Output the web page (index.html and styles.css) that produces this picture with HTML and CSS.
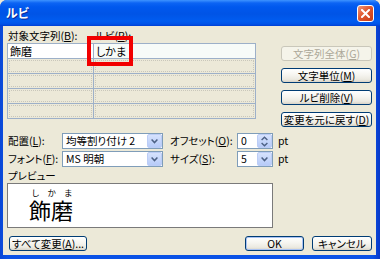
FILE: index.html
```html
<!DOCTYPE html>
<html lang="ja">
<head>
<meta charset="utf-8">
<link rel="stylesheet" href="styles.css">
</head>
<body>
<div class="window">
  <div class="titlebar">
    <span class="title">ルビ</span>
    <span class="close"><svg width="9" height="9" viewBox="0 0 9 9"><path d="M1 1L8 8M8 1L1 8" stroke="#fff" stroke-width="2" stroke-linecap="square"/></svg></span>
  </div>
  <div class="client">
    <div class="top">
      <div class="left">
        <div class="heads"><span class="h1">対象文字列(<u>B</u>):</span><span class="h2">ルビ(<u>R</u>):</span></div>
        <div class="grid">
          <div class="row first"><div class="cell c1"><span class="txt">飾磨</span></div><div class="cell c2"><span class="txt">しかま</span></div></div>
          <div class="row"><div class="cell c1"><div class="dot"></div></div><div class="cell c2"><div class="dot"></div></div></div>
          <div class="row"><div class="cell c1"><div class="dot"></div></div><div class="cell c2"><div class="dot"></div></div></div>
          <div class="row"><div class="cell c1"><div class="dot"></div></div><div class="cell c2"><div class="dot"></div></div></div>
          <div class="row"><div class="cell c1"><div class="dot"></div></div><div class="cell c2"><div class="dot"></div></div></div>
        </div>
        <div class="highlight"></div>
      </div>
      <div class="btns">
        <div class="btn disabled">文字列全体(<u>G</u>)</div>
        <div class="btn">文字単位(<u>M</u>)</div>
        <div class="btn">ルビ削除(<u>V</u>)</div>
        <div class="btn">変更を元に戻す(<u>D</u>)</div>
      </div>
    </div>
    <div class="opts">
      <span class="lab">配置(<u>L</u>):</span>
      <div class="combo"><span class="val">均等割り付け 2</span><span class="arrow"><svg width="7" height="5" viewBox="0 0 7 5"><path d="M0.6 0.6L3.5 3.6L6.4 0.6" fill="none" stroke="#4d6185" stroke-width="1.5"/></svg></span></div>
      <span class="lab2">オフセット(<u>O</u>):</span>
      <div class="combo"><span class="val">0</span><span class="arrow spin"><svg width="7" height="11" viewBox="0 0 7 11"><path d="M0.6 4L3.5 1.2L6.4 4M0.6 7L3.5 9.8L6.4 7" fill="none" stroke="#4d6185" stroke-width="1.4"/></svg></span></div>
      <span class="pt">pt</span>

      <span class="lab">フォント(<u>F</u>):</span>
      <div class="combo"><span class="val">MS 明朝</span><span class="arrow"><svg width="7" height="5" viewBox="0 0 7 5"><path d="M0.6 0.6L3.5 3.6L6.4 0.6" fill="none" stroke="#4d6185" stroke-width="1.5"/></svg></span></div>
      <span class="lab2">サイズ(<u>S</u>):</span>
      <div class="combo"><span class="val">5</span><span class="arrow"><svg width="7" height="5" viewBox="0 0 7 5"><path d="M0.6 0.6L3.5 3.6L6.4 0.6" fill="none" stroke="#4d6185" stroke-width="1.5"/></svg></span></div>
      <span class="pt">pt</span>
    </div>
    <div class="prevlab">プレビュー</div>
    <div class="preview">
      <div class="rubyword">
        <div class="rt"><span>し</span><span>か</span><span>ま</span></div>
        <div class="rb">飾磨</div>
      </div>
    </div>
    <div class="bottom">
      <div class="btn allbtn">すべて変更(<u>A</u>)...</div>
      <div class="spacer"></div>
      <div class="btn okbtn">OK</div>
      <div class="btn cancelbtn">キャンセル</div>
    </div>
  </div>
</div>
</body>
</html>
```
FILE: styles.css
```css
html, body {
  margin: 0;
  padding: 0;
}
body {
  width: 380px;
  height: 259px;
  overflow: hidden;
  font-family: "Noto Sans CJK JP", "Liberation Sans", sans-serif;
  font-size: 10.5px;
  font-feature-settings: "palt";
  white-space: nowrap;
  color: #000;
  background: #ece9d8;
}
u {
  text-decoration: underline;
  text-underline-offset: 1px;
}
.window {
  width: 380px;
  height: 259px;
  display: flex;
  flex-direction: column;
  background: linear-gradient(to right, #0a47d6, #0a52e6 2%, #0a52e6 98%, #0838c8);
  border-radius: 7px 7px 0 0;
  overflow: hidden;
}
.titlebar {
  height: 26px;
  flex: none;
  display: flex;
  align-items: center;
  justify-content: space-between;
  padding: 0 6px;
  background: linear-gradient(to bottom, #3e93ff 0px, #0c64f4 3px, #0058ee 7px, #0054e6 14px, #005cf0 21px, #0053e8 24px, #003fd4 26px);
}
.title {
  color: #fff;
  font-weight: bold;
  font-size: 12px;
  line-height: 14px;
  text-shadow: 1px 1px 0 #0b2a9a;
}
.close {
  width: 17px;
  height: 17px;
  box-sizing: border-box;
  border: 1px solid #fff;
  border-radius: 3px;
  background: linear-gradient(135deg, #f0977a 0%, #e0582f 45%, #c73a16 100%);
  display: flex;
  align-items: center;
  justify-content: center;
}
.client {
  flex: 1;
  min-height: 0;
  margin: 0 4px 4px 3px;
  background: #ece9d8;
  padding: 3px 4px 4px 4px;
  display: flex;
  flex-direction: column;
}
.top {
  display: flex;
  justify-content: space-between;
  align-items: flex-start;
}
.left {
  position: relative;
  width: 249px;
}
.heads {
  height: 14px;
  line-height: 14px;
  display: flex;
}
.h1 {
  width: 87px;
  padding-left: 1px;
}
.grid {
  border: 1px solid #9db0c8;
}
.row {
  display: flex;
  height: 14px;
}
.row + .row {
  border-top: 1px solid #9db0c8;
}
.cell {
  box-sizing: border-box;
  display: flex;
  align-items: center;
}
.c1 {
  width: 86px;
  border-right: 1px solid #9db0c8;
}
.c2 {
  flex: 1;
}
.first .cell {
  background: #fff;
}
.first .c2 {
  background: #f7fbf8;
}
.txt {
  padding-left: 2px;
  line-height: 14px;
  font-size: 11px;
}
.dot {
  flex: 1;
  align-self: stretch;
  margin: 1px;
  border: 1px dotted #c9c7bb;
}
.highlight {
  position: absolute;
  left: 80px;
  top: 7px;
  width: 46px;
  height: 30px;
  box-sizing: border-box;
  border: 4px solid #f20000;
}
.btns {
  width: 91px;
  margin-top: 17px;
  display: flex;
  flex-direction: column;
  gap: 7px;
}
.btn {
  height: 15px;
  box-sizing: border-box;
  border: 1px solid #003c74;
  border-radius: 3px;
  background: linear-gradient(to bottom, #ffffff 0%, #f6f5f0 45%, #ebe9e0 80%, #d8d3c7 100%);
  display: flex;
  align-items: center;
  justify-content: center;
  line-height: 13px;
}
.btn.disabled {
  border-color: #c9c7ba;
  background: #f5f4ea;
  color: #aca899;
}
.opts {
  margin-top: 6px;
  display: grid;
  grid-template-columns: 55px 101px 74px 36px auto;
  grid-auto-rows: 16px;
  row-gap: 2px;
  align-items: center;
}
.lab {
  padding-left: 1px;
  line-height: 14px;
}
.lab2 {
  padding-left: 7px;
  line-height: 14px;
}
.pt {
  padding-left: 5px;
  line-height: 14px;
}
.combo {
  height: 16px;
  box-sizing: border-box;
  border: 1px solid #7f9db9;
  background: #fff;
  display: flex;
  align-items: center;
  justify-content: space-between;
}
.val {
  padding-left: 3px;
  line-height: 14px;
}
.arrow {
  width: 15px;
  height: 14px;
  box-sizing: border-box;
  border: 1px solid #bccdf6;
  border-radius: 2px;
  background: linear-gradient(to bottom, #d6e2fd, #b7cbf8);
  display: flex;
  align-items: center;
  justify-content: center;
}
.prevlab {
  margin-top: 2px;
  line-height: 14px;
  padding-left: 1px;
}
.preview {
  width: 266px;
  height: 45px;
  flex: none;
  box-sizing: border-box;
  border: 1px solid #7a7a7a;
  background: #fff;
  padding-left: 21px;
}
.rubyword {
  display: inline-flex;
  flex-direction: column;
  width: 45px;
}
.rt {
  display: flex;
  justify-content: space-between;
  padding: 0 2px 0 3px;
  font-size: 8.5px;
  line-height: 10px;
  height: 10px;
  margin-top: 1px;
}
.rb {
  font-size: 22px;
  line-height: 24px;
  font-feature-settings: normal;
}
.bottom {
  margin-top: 8px;
  display: flex;
}
.allbtn {
  width: 78px;
  margin-left: 2px;
}
.spacer {
  flex: 1;
}
.okbtn {
  width: 59px;
  box-shadow: inset 0 0 0 1px #a9c2f3;
}
.cancelbtn {
  width: 60px;
  margin-left: 8px;
}
```
